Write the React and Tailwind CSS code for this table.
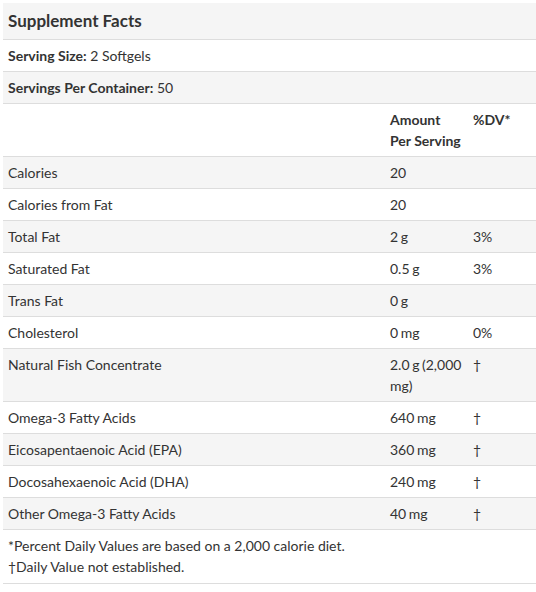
import React from 'react';

const rows = [
  { name: 'Calories', amount: '20', dv: '' },
  { name: 'Calories from Fat', amount: '20', dv: '' },
  { name: 'Total Fat', amount: '2 g', dv: '3%' },
  { name: 'Saturated Fat', amount: '0.5 g', dv: '3%' },
  { name: 'Trans Fat', amount: '0 g', dv: '' },
  { name: 'Cholesterol', amount: '0 mg', dv: '0%' },
  { name: 'Natural Fish Concentrate', amount: '2.0 g (2,000 mg)', dv: '†' },
  { name: 'Omega-3 Fatty Acids', amount: '640 mg', dv: '†' },
  { name: 'Eicosapentaenoic Acid (EPA)', amount: '360 mg', dv: '†' },
  { name: 'Docosahexaenoic Acid (DHA)', amount: '240 mg', dv: '†' },
  { name: 'Other Omega-3 Fatty Acids', amount: '40 mg', dv: '†' },
];

const cell = 'px-[5px] py-[5px] align-top border-b border-[#dddddd]';

export default function App() {
  return (
    <div className="min-h-[592px] bg-white pl-[3px] pt-[3px] font-['Lato',sans-serif] text-[14px] leading-[21px] text-[#333333]">
      <table className="w-[533px] table-fixed border-collapse">
        <colgroup>
          <col className="w-[382px]" />
          <col className="w-[83px]" />
          <col className="w-[68px]" />
        </colgroup>
        <tbody>
          <tr className="bg-[#f5f5f5]">
            <td colSpan={3} className="px-[5px] py-[5px] border-b border-[#dddddd] text-[17px] leading-[26px] font-bold">
              Supplement Facts
            </td>
          </tr>
          <tr>
            <td colSpan={3} className={cell}>
              <span className="font-bold">Serving Size:</span> 2 Softgels
            </td>
          </tr>
          <tr className="bg-[#f5f5f5]">
            <td colSpan={3} className={cell}>
              <span className="font-bold">Servings Per Container:</span> 50
            </td>
          </tr>
          <tr>
            <td className={cell}></td>
            <td className={cell + ' font-bold'}>Amount Per Serving</td>
            <td className={cell + ' font-bold'}>%DV*</td>
          </tr>
          {rows.map((r, i) => (
            <tr key={r.name} className={i % 2 === 0 ? 'bg-[#f5f5f5]' : ''}>
              <td className={cell}>{r.name}</td>
              <td className="pl-[5px] pr-0 py-[5px] align-top border-b border-[#dddddd] [word-spacing:-1px]">{r.amount}</td>
              <td className={cell}>{r.dv}</td>
            </tr>
          ))}
          <tr>
            <td colSpan={3} className="px-[5px] pt-[5px] pb-[6px] border-b border-[#dddddd]">
              *Percent Daily Values are based on a 2,000 calorie diet.
              <br />
              †Daily Value not established.
            </td>
          </tr>
        </tbody>
      </table>
    </div>
  );
}
